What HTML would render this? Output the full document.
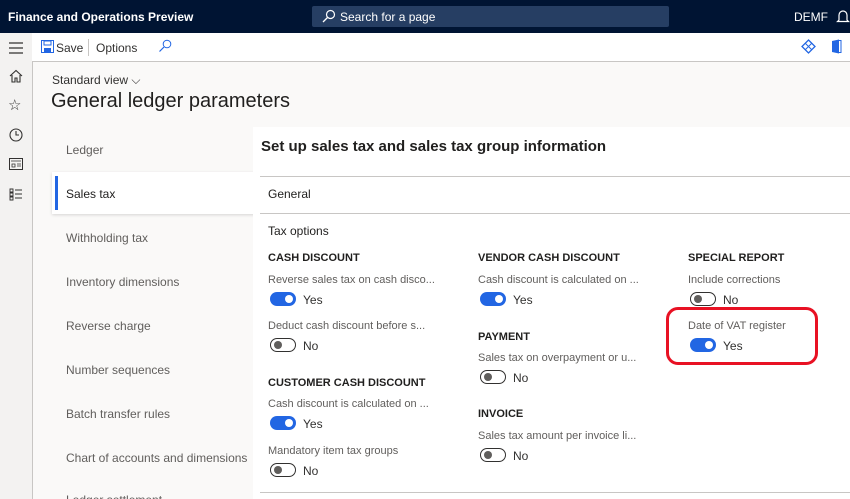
<!DOCTYPE html>
<html><head><style>
*{margin:0;padding:0;box-sizing:border-box}
html,body{width:850px;height:499px;overflow:hidden}
body{font-family:"Liberation Sans",sans-serif;background:#faf9f8;position:relative;color:#323130}
.a{position:absolute;white-space:nowrap}
.top{left:0;top:0;width:850px;height:33px;background:#001433;color:#fff}
.tb{left:32px;top:33px;width:818px;height:29px;background:#fff;border-bottom:1px solid #c8c6c4}
.rail{left:0;top:33px;width:33px;height:466px;background:#f3f2f1;border-right:1px solid #c8c6c4}
.tab{left:66px;font-size:12px;color:#605e5c}
.panel{left:253px;top:127px;width:597px;height:372px;background:#fff}
.h{font-size:11px;font-weight:bold;color:#201f1e}
.l{font-size:11px;color:#605e5c}
.tg{width:26px;height:14px;border-radius:7px;position:absolute}
.on{background:#2266e3}
.on:after{content:"";position:absolute;right:3px;top:3px;width:8px;height:8px;border-radius:50%;background:#fff}
.off{border:1px solid #323130;background:#fff}
.off:after{content:"";position:absolute;left:3px;top:2px;width:8px;height:8px;border-radius:50%;background:#605e5c}
.v{font-size:12px;color:#323130}
</style></head><body>
<div class="a top">
 <div class="a" style="left:8px;top:10px;font-size:12px;font-weight:bold">Finance and Operations Preview</div>
 <div class="a" style="left:312px;top:6px;width:357px;height:21px;background:#263e63;border-radius:2px"></div>
 <svg class="a" style="left:322px;top:9px" width="14" height="14" viewBox="0 0 14 14"><circle cx="8.5" cy="5.5" r="4" fill="none" stroke="#fff" stroke-width="1.2"/><line x1="5.5" y1="8.5" x2="1" y2="13" stroke="#fff" stroke-width="1.3"/></svg>
 <div class="a" style="left:340px;top:10px;font-size:12px">Search for a page</div>
 <div class="a" style="left:794px;top:10px;font-size:12px">DEMF</div>
 <svg class="a" style="left:836px;top:9px" width="14" height="16" viewBox="0 0 14 16"><path d="M3 11V6a4 4 0 0 1 8 0v5l1.5 1.5h-11z" fill="none" stroke="#fff" stroke-width="1.2"/></svg>
</div>
<div class="a rail">
 <svg class="a" style="left:8px;top:9px" width="16" height="12"><path d="M1 1h14M1 6h14M1 11h14" stroke="#323130" stroke-width="1.2"/></svg>
 <svg class="a" style="left:9px;top:36px" width="14" height="14" viewBox="0 0 14 14"><path d="M1 7L7 1.5 13 7M3 6v7h3v-4h2v4h3V6" fill="none" stroke="#323130" stroke-width="1.1"/></svg>
 <div class="a" style="left:8px;top:63px;font-size:15px">☆</div>
 <svg class="a" style="left:9px;top:95px" width="14" height="14"><circle cx="7" cy="7" r="6" fill="none" stroke="#323130" stroke-width="1.1"/><path d="M7 3v4h3" fill="none" stroke="#323130" stroke-width="1.1"/></svg>
 <svg class="a" style="left:9px;top:125px" width="14" height="12"><rect x=".5" y=".5" width="13" height="11" fill="none" stroke="#323130"/><path d="M2 3h10M3 6h3v3H3zM8 6h4M8 8h4" fill="none" stroke="#323130" stroke-width=".8"/></svg>
 <svg class="a" style="left:9px;top:155px" width="14" height="13"><path d="M1 1h3v3H1zM1 5h3v3H1zM1 9h3v3H1zM6 2h7M6 6h7M6 10h7" fill="none" stroke="#323130" stroke-width=".9"/></svg>
</div>
<div class="a tb">
 <svg class="a" style="left:9px;top:7px" width="13" height="13"><rect x=".5" y=".5" width="12" height="12" fill="none" stroke="#2266e3"/><rect x="3" y="1" width="7" height="4" fill="none" stroke="#2266e3"/><rect x="3" y="8" width="7" height="4" fill="#2266e3"/></svg>
 <div class="a" style="left:24px;top:8px;font-size:12px">Save</div>
 <div class="a" style="left:56px;top:6px;width:1px;height:17px;background:#c8c6c4"></div>
 <div class="a" style="left:64px;top:8px;font-size:12px">Options</div>
 <svg class="a" style="left:126px;top:6px" width="14" height="14"><circle cx="9" cy="5" r="3.8" fill="none" stroke="#2266e3"/><line x1="6" y1="8" x2="1.5" y2="12.5" stroke="#2266e3" stroke-width="1.2"/></svg>
 <svg class="a" style="left:769px;top:6px" width="15" height="15"><path d="M7.5 1L14 7.5 7.5 14 1 7.5z" fill="none" stroke="#2266e3" stroke-width="1.3"/><path d="M4 4l7 7M11 4l-7 7" stroke="#2266e3"/></svg>
 <svg class="a" style="left:798px;top:6px" width="12" height="15"><path d="M2 2l7-1.5v14L2 13z" fill="#2266e3"/><path d="M9 1.5h2v12H9" fill="none" stroke="#2266e3"/></svg>
</div>
<div class="a" style="left:52px;top:73px;font-size:12px;color:#323130">Standard view ⌵</div>
<div class="a" style="left:51px;top:90px;font-size:20px;color:#201f1e">General ledger parameters</div>
<div class="a" style="left:52px;top:172px;width:208px;height:42px;background:#fff;box-shadow:0 1px 3px rgba(0,0,0,.15)"></div>
<div class="a" style="left:55px;top:176px;width:3px;height:34px;background:#2266e3"></div>
<div class="a tab" style="top:143px">Ledger</div>
<div class="a tab" style="top:187px;color:#201f1e">Sales tax</div>
<div class="a tab" style="top:231px">Withholding tax</div>
<div class="a tab" style="top:275px">Inventory dimensions</div>
<div class="a tab" style="top:319px">Reverse charge</div>
<div class="a tab" style="top:363px">Number sequences</div>
<div class="a tab" style="top:407px">Batch transfer rules</div>
<div class="a tab" style="top:451px">Chart of accounts and dimensions</div>
<div class="a tab" style="top:493px">Ledger settlement</div>
<div class="a panel"></div>
<div class="a" style="left:261px;top:138px;font-size:15px;font-weight:bold;color:#201f1e">Set up sales tax and sales tax group information</div>
<div class="a" style="left:260px;top:176px;width:590px;height:1px;background:#c8c6c4"></div>
<div class="a" style="left:268px;top:187px;font-size:12px;color:#201f1e">General</div>
<div class="a" style="left:260px;top:213px;width:590px;height:1px;background:#c8c6c4"></div>
<div class="a" style="left:268px;top:224px;font-size:12px;color:#201f1e">Tax options</div>
<div class="a" style="left:260px;top:492px;width:590px;height:1px;background:#c8c6c4"></div>

<div class="a h" style="left:268px;top:252px">CASH DISCOUNT</div>
<div class="a l" style="left:268px;top:274px">Reverse sales tax on cash disco...</div>
<div class="tg on" style="left:270px;top:292px"></div><div class="a v" style="left:303px;top:293px">Yes</div>
<div class="a l" style="left:268px;top:320px">Deduct cash discount before s...</div>
<div class="tg off" style="left:270px;top:338px"></div><div class="a v" style="left:303px;top:339px">No</div>
<div class="a h" style="left:268px;top:377px">CUSTOMER CASH DISCOUNT</div>
<div class="a l" style="left:268px;top:398px">Cash discount is calculated on ...</div>
<div class="tg on" style="left:270px;top:416px"></div><div class="a v" style="left:303px;top:417px">Yes</div>
<div class="a l" style="left:268px;top:445px">Mandatory item tax groups</div>
<div class="tg off" style="left:270px;top:463px"></div><div class="a v" style="left:303px;top:464px">No</div>

<div class="a h" style="left:478px;top:252px">VENDOR CASH DISCOUNT</div>
<div class="a l" style="left:478px;top:274px">Cash discount is calculated on ...</div>
<div class="tg on" style="left:480px;top:292px"></div><div class="a v" style="left:513px;top:293px">Yes</div>
<div class="a h" style="left:478px;top:331px">PAYMENT</div>
<div class="a l" style="left:478px;top:352px">Sales tax on overpayment or u...</div>
<div class="tg off" style="left:480px;top:370px"></div><div class="a v" style="left:513px;top:371px">No</div>
<div class="a h" style="left:478px;top:408px">INVOICE</div>
<div class="a l" style="left:478px;top:430px">Sales tax amount per invoice li...</div>
<div class="tg off" style="left:480px;top:448px"></div><div class="a v" style="left:513px;top:449px">No</div>

<div class="a h" style="left:688px;top:252px">SPECIAL REPORT</div>
<div class="a l" style="left:688px;top:274px">Include corrections</div>
<div class="tg off" style="left:690px;top:292px"></div><div class="a v" style="left:723px;top:293px">No</div>
<div class="a l" style="left:688px;top:320px">Date of VAT register</div>
<div class="tg on" style="left:690px;top:338px"></div><div class="a v" style="left:723px;top:339px">Yes</div>
<div class="a" style="left:666px;top:307px;width:152px;height:58px;border:3px solid #e81123;border-radius:12px"></div>
</body></html>
